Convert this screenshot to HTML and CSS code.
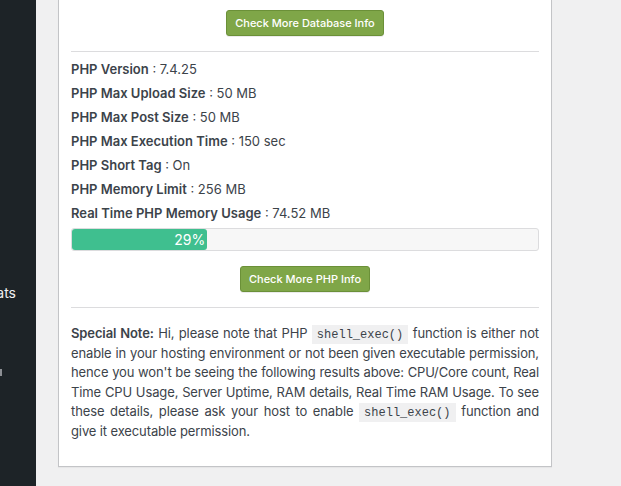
FILE: index.html
```html
<!DOCTYPE html>
<html lang="en">
<head>
<meta charset="utf-8">
<title>PHP Info</title>
<link rel="stylesheet" href="styles.css">
</head>
<body>
<div class="page">
  <aside class="sidebar">
    <div class="menu-item">Stats</div>
    <div class="menu-mark"></div>
  </aside>
  <main class="main">
    <section class="card">
      <div class="btn-row first">
        <button class="btn" type="button">Check More Database Info</button>
      </div>
      <hr class="rule">
      <ul class="info">
        <li><b>PHP Version</b> : 7.4.25</li>
        <li><b>PHP Max Upload Size</b> : 50 MB</li>
        <li><b>PHP Max Post Size</b> : 50 MB</li>
        <li><b>PHP Max Execution Time</b> : 150 sec</li>
        <li><b>PHP Short Tag</b> : On</li>
        <li><b>PHP Memory Limit</b> : 256 MB</li>
        <li><b>Real Time PHP Memory Usage</b> : 74.52 MB</li>
      </ul>
      <div class="progress">
        <div class="progress-fill" style="width: 29%">29%</div>
      </div>
      <div class="btn-row">
        <button class="btn" type="button">Check More PHP Info</button>
      </div>
      <hr class="rule">
      <p class="note"><b>Special Note:</b> Hi, please note that PHP <code>shell_exec()</code> function is either not enable in your hosting environment or not been given executable permission, hence you won't be seeing the following results above: CPU/Core count, Real Time CPU Usage, Server Uptime, RAM details, Real Time RAM Usage. To see these details, please ask your host to enable <code>shell_exec()</code> function and give it executable permission.</p>
    </section>
  </main>
</div>
</body>
</html>
```
FILE: styles.css
```css
html, body {
  margin: 0;
  padding: 0;
}
body {
  background: #f0f0f1;
  font-family: Inter, "Liberation Sans", Arial, sans-serif;
  color: #3c434a;
  font-size: 13px;
}
.page {
  display: flex;
  height: 486px;
  overflow: hidden;
}
.sidebar {
  width: 36px;
  flex: none;
  background: #1d2327;
  overflow: hidden;
  display: flex;
  flex-direction: column;
  align-items: flex-end;
  padding-top: 282px;
  box-sizing: border-box;
}
.menu-item {
  color: #f0f0f1;
  font-size: 14px;
  line-height: 22px;
  padding-right: 20px;
  white-space: nowrap;
}
.menu-mark {
  align-self: flex-start;
  width: 2px;
  height: 7px;
  margin-top: 65px;
  background: #8c8f94;
}
.main {
  flex: 1;
  padding-left: 22px;
}
.card {
  width: 494px;
  box-sizing: border-box;
  background: #fff;
  border: 1px solid #c3c4c7;
  border-top: none;
  box-shadow: 0 1px 1px rgba(0, 0, 0, 0.04);
  padding: 0 12px 25px;
}
.btn-row {
  display: flex;
  justify-content: center;
  padding: 15px 0;
}
.btn-row.first {
  padding-top: 10px;
}
.btn {
  height: 26px;
  padding: 0 8px;
  background: #7fa648;
  border: 1px solid #6b9038;
  border-radius: 3px;
  color: #fff;
  font-family: inherit;
  font-size: 11px;
  font-weight: 500;
  line-height: 24px;
  box-shadow: 0 1px 0 rgba(0, 0, 0, 0.08);
}
.rule {
  margin: 0;
  border: none;
  border-top: 1px solid #dcdcde;
}
.info {
  list-style: none;
  margin: 0;
  padding: 5px 0 0;
}
.info li {
  line-height: 24px;
}
.info b {
  font-weight: 600;
}
.progress {
  margin-top: 3px;
  height: 23px;
  box-sizing: border-box;
  border: 1px solid #dcdcde;
  border-radius: 3px;
  background: #f7f7f7;
}
.progress-fill {
  height: 100%;
  background: #3fbf8f;
  border-radius: 3px;
  color: #fff;
  font-size: 14px;
  line-height: 21px;
  text-align: right;
  padding-right: 2px;
  box-sizing: border-box;
}
.note {
  margin: 16px 0 0;
  line-height: 19.5px;
  text-align: justify;
  letter-spacing: -0.12px;
}
.note b {
  font-weight: 600;
}
.note code {
  font-family: "Liberation Mono", "DejaVu Sans Mono", monospace;
  font-size: 12px;
  line-height: 12px;
  letter-spacing: 0;
  background: #f0f0f1;
  padding: 3px 5px 2px;
}
```
